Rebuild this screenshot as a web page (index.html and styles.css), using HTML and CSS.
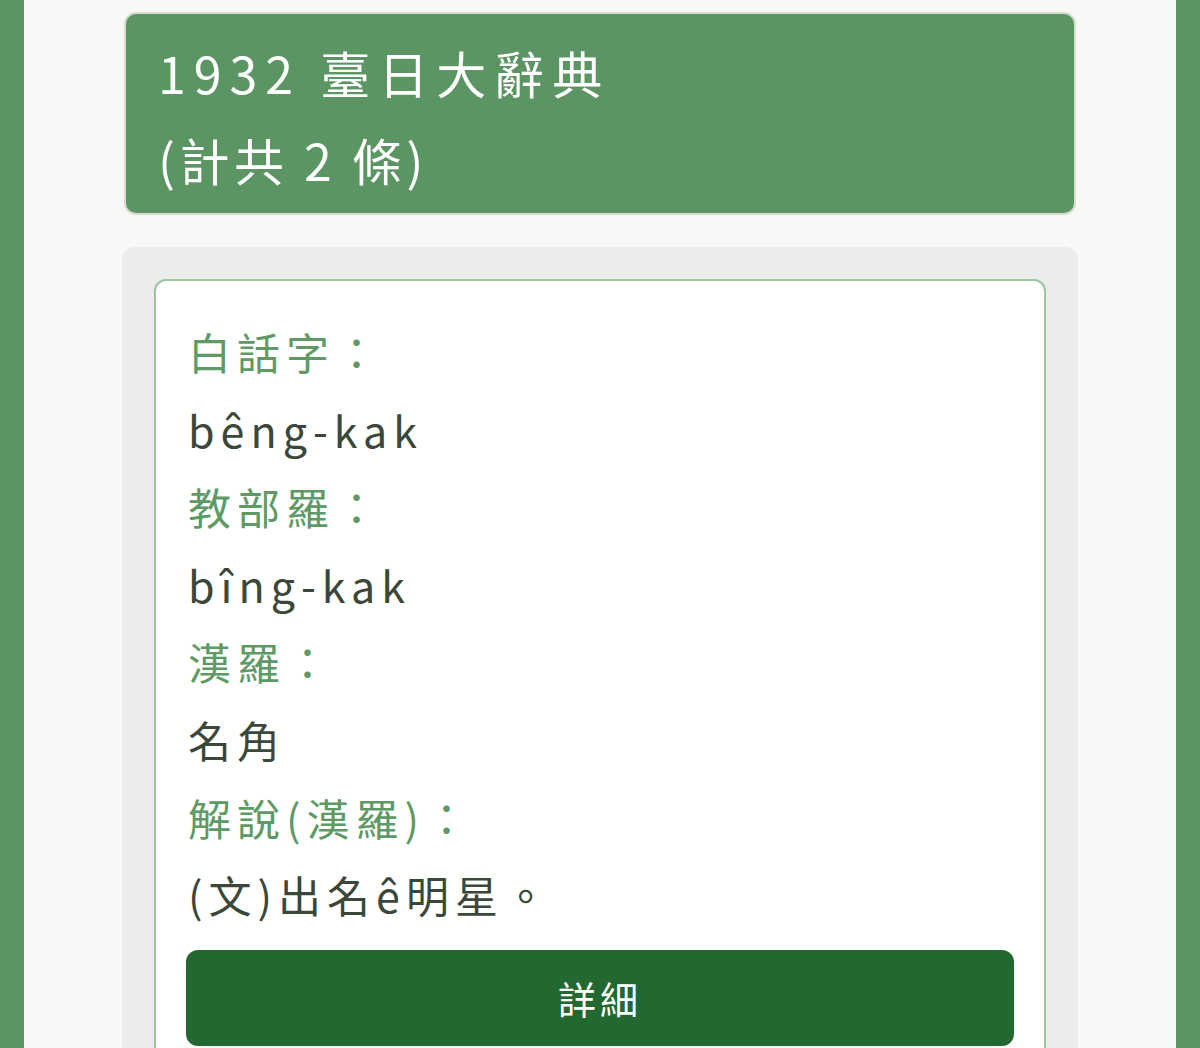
FILE: index.html
```html
<!DOCTYPE html>
<html lang="zh-Hant">
<head>
    <meta charset="UTF-8">
    <meta name="viewport" content="width=device-width, initial-scale=1.0">
    <title>1932 臺日大辭典</title>
    <link rel="stylesheet" href="styles.css">
</head>
<body>
    <div class="page">
        <div class="dict-header">
            <div class="dict-title">1932 臺日大辭典</div>
            <div class="dict-count">(計共 2 條)</div>
        </div>

        <div class="result-list">
            <div class="entry">
                <div class="label">白話字：</div>
                <div class="value">bêng-kak</div>
                <div class="label">教部羅：</div>
                <div class="value">bîng-kak</div>
                <div class="label">漢羅：</div>
                <div class="value">名角</div>
                <div class="label">解說(漢羅)：</div>
                <div class="value">(文)出名ê明星。</div>
                <button class="detail-button">詳細</button>
            </div>
        </div>
    </div>
</body>
</html>
```

FILE: styles.css
```css
body {
    font-family: "Noto Sans CJK TC", "Noto Sans", sans-serif;
    margin: 0;
    background-color: #5b9563;
}
.page {
    margin: 0 24px;
    min-height: 1048px;
    padding: 12px 98px 0;
    background-color: #f8f9f7;
    box-sizing: border-box;
}
.dict-header {
    margin: 0 2px;
    background-color: #5b9563;
    border: 2px solid #d7dccf;
    border-radius: 12px;
    padding: 15px 32px 10px;
    color: #fff;
    font-size: 50px;
    line-height: 87px;
    letter-spacing: 8px;
}
.dict-count {
    letter-spacing: 4.5px;
}
.result-list {
    margin-top: 32px;
    background-color: #ececec;
    border-radius: 12px;
    padding: 32px 32px 40px;
}
.entry {
    background: #fff;
    border: 2px solid #9cc59f;
    border-radius: 12px;
    padding: 32px 30px 40px 32px;
    font-size: 43px;
    line-height: 77.6px;
    letter-spacing: 6px;
}
.label {
    color: #5e9a66;
}
.value {
    color: #3b4739;
}
.detail-button {
    display: block;
    width: calc(100% + 2px);
    height: 96px;
    margin: 16px 0 0 -2px;
    border: none;
    border-radius: 12px;
    background-color: #236830;
    color: #fff;
    font-family: inherit;
    font-size: 38px;
    letter-spacing: 4px;
    cursor: pointer;
}
```
